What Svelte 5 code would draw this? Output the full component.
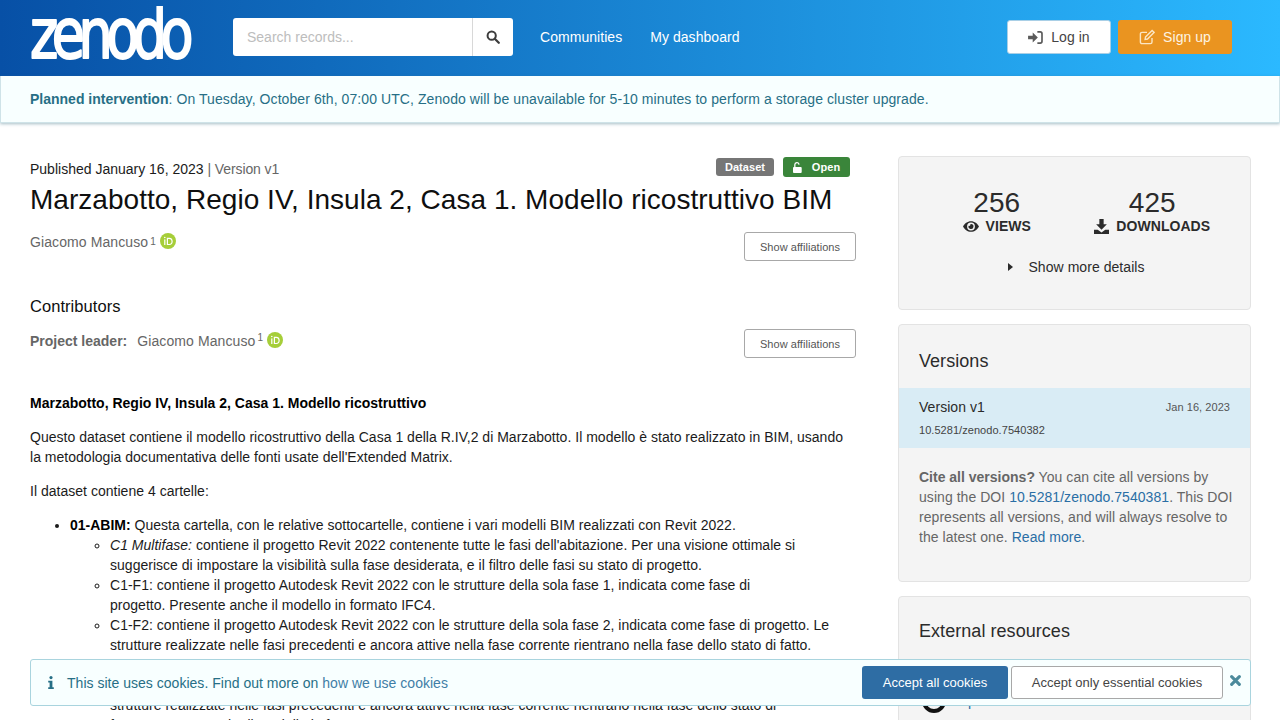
<script lang="ts">
  const subItems = [
    {
      em: 'C1 Multifase:',
      text: " contiene il progetto Revit 2022 contenente tutte le fasi dell'abitazione. Per una visione ottimale si suggerisce di impostare la visibilità sulla fase desiderata, e il filtro delle fasi su stato di progetto."
    },
    {
      text: 'C1-F1: contiene il progetto Autodesk Revit 2022 con le strutture della sola fase 1, indicata come fase di progetto.\u00a0Presente anche il modello in formato IFC4.'
    },
    {
      text: 'C1-F2: contiene il progetto Autodesk Revit 2022 con le strutture della sola fase 2, indicata come fase di progetto. Le strutture realizzate nelle fasi precedenti e ancora attive nella fase corrente rientrano nella fase dello stato di fatto. Presente anche il modello in formato IFC4.'
    },
    {
      text: 'C1-F3: contiene il progetto Autodesk Revit 2022 con le strutture della sola fase 3, indicata come fase di progetto. Le strutture realizzate nelle fasi precedenti e ancora attive nella fase corrente rientrano nella fase dello stato di fatto.\u00a0Presente anche il modello in formato IFC4.'
    }
  ];
</script>

{#snippet orcid()}
  <svg class="orcid" viewBox="0 0 16 16" width="16" height="16">
    <circle cx="8" cy="8" r="8" fill="#a6ce39" />
    <rect x="4.200" y="6.400" width="1.200" height="5.600" fill="#fff" />
    <circle cx="4.800" cy="4.500" r="0.800" fill="#fff" />
    <path fill-rule="evenodd" d="M6.800 4.800h2.600c2.200 0 3.300 1.600 3.300 3.600s-1.200 3.600-3.300 3.600H6.800zm1.200 1.100v5h1.300c1.600 0 2.200-1.200 2.200-2.500s-.7-2.500-2.200-2.500z" fill="#fff" />
  </svg>
{/snippet}

<div class="page">
  <header class="topbar">
    <svg class="logo" viewBox="0 0 164 60" width="164" height="60" role="img" aria-label="zenodo">
      <text x="0" y="41" transform="scale(1 1.280)" class="logo-text">zenodo</text>
    </svg>

    <div class="search">
      <input placeholder="Search records..." />
      <button aria-label="Search">
        <svg viewBox="0 0 16 16" width="14" height="14">
          <circle cx="6.500" cy="6.500" r="4.700" fill="none" stroke="#3d3d3d" stroke-width="2.300" />
          <path d="M10 10l4.600 4.600" stroke="#3d3d3d" stroke-width="2.600" stroke-linecap="round" />
        </svg>
      </button>
    </div>

    <nav>
      <a href="#a">Communities</a>
      <a href="#b">My dashboard</a>
    </nav>

    <div class="auth">
      <button class="login">
        <svg viewBox="0 0 16 14" width="15" height="13">
          <path d="M0 5h5V1.500L10.500 7 5 12.500V9H0z" fill="#5a5a5a" />
          <path d="M10 1h3a2 2 0 0 1 2 2v8a2 2 0 0 1-2 2h-3" fill="none" stroke="#5a5a5a" stroke-width="1.800" />
        </svg>
        Log in
      </button>
      <button class="signup">
        <svg viewBox="0 0 16 16" width="16" height="16" fill="none" stroke="#fbe6c4" stroke-width="1.400">
          <path d="M13 9v4a1.600 1.600 0 0 1-1.600 1.600H3A1.600 1.600 0 0 1 1.400 13V5A1.600 1.600 0 0 1 3 3.400h5" />
          <path d="M6.500 8l6.600-6.600 2 2L8.500 10l-2.400.4z" />
        </svg>
        Sign up
      </button>
    </div>
  </header>

  <div class="notice">
    <span><strong>Planned intervention</strong>: On Tuesday, October 6th, 07:00 UTC, Zenodo will be unavailable for 5-10 minutes to perform a storage cluster upgrade.</span>
  </div>

  <div class="layout">
    <main>
      <div class="meta">
        <p>Published January 16, 2023 <span class="dim">| Version v1</span></p>
        <div class="labels">
          <span class="label grey">Dataset</span>
          <span class="label green">
            <svg viewBox="0 0 12 12" width="11" height="11">
              <path d="M1 5.500h7.500a1 1 0 0 1 1 1V11a1 1 0 0 1-1 1H1a1 1 0 0 1-1-1V6.500a1 1 0 0 1 1-1z" fill="#fff" />
              <path d="M2 5.500V3.200a2.300 2.300 0 0 1 4.600-.3" fill="none" stroke="#fff" stroke-width="1.400" />
            </svg>
            Open
          </span>
        </div>
      </div>
      <h1>Marzabotto, Regio IV, Insula 2, Casa 1. Modello ricostruttivo BIM</h1>

      <div class="creators">
        <div class="person">Giacomo Mancuso<sup>1</sup>{@render orcid()}</div>
        <button class="ghost">Show affiliations</button>
      </div>

      <h2>Contributors</h2>
      <div class="creators second">
        <div class="person"><strong>Project leader:</strong><span class="name">Giacomo Mancuso<sup>1</sup></span>{@render orcid()}</div>
        <button class="ghost">Show affiliations</button>
      </div>

      <div class="description">
        <p><strong class="black">Marzabotto, Regio IV, Insula 2, Casa 1. Modello ricostruttivo</strong></p>
        <p>Questo dataset contiene il modello ricostruttivo della Casa 1 della R.IV,2 di Marzabotto. Il modello è stato realizzato in BIM, usando la metodologia documentativa delle fonti usate dell'Extended Matrix.</p>
        <p>Il dataset contiene 4 cartelle:</p>
        <ul>
          <li>
            <strong class="black">01-ABIM:</strong> Questa cartella, con le relative sottocartelle, contiene i vari modelli BIM realizzati con Revit 2022.
            <ul>
              {#each subItems as item}
                <li>{#if item.em}<em>{item.em}</em>{/if}{item.text}</li>
              {/each}
            </ul>
          </li>
        </ul>
      </div>
    </main>

    <aside>
      <section class="card stats">
        <div class="stat-row">
          <div class="stat">
            <div class="num">256</div>
            <div class="cap">
              <svg viewBox="0 0 18 12" width="16" height="11">
                <path fill-rule="evenodd" d="M9 0c4 0 7.300 2.700 9 6-1.700 3.300-5 6-9 6S1.700 9.300 0 6c1.700-3.300 5-6 9-6zm0 1.600a4.400 4.400 0 1 0 0 8.800 4.400 4.400 0 0 0 0-8.800zM9 3.200a2.800 2.800 0 1 1-2.700 2 1.500 1.500 0 0 0 2-2z" fill="#2b2b2b" />
              </svg>
              VIEWS
            </div>
          </div>
          <div class="stat">
            <div class="num">425</div>
            <div class="cap">
              <svg viewBox="0 0 14 14" width="15" height="15">
                <path d="M5 0h4v5h3L7 10 2 5h3z" fill="#2b2b2b" />
                <path d="M0 10h3.500L7 12.500 10.500 10H14v4H0z" fill="#2b2b2b" />
              </svg>
              DOWNLOADS
            </div>
          </div>
        </div>
        <div class="more">
          <svg viewBox="0 0 5 8" width="5" height="8"><path d="M0 0l5 4-5 4z" fill="#2b2b2b" /></svg>
          Show more details
        </div>
      </section>

      <section class="card versions">
        <h3>Versions</h3>
        <div class="version">
          <div class="v-top"><span>Version v1</span><small>Jan 16, 2023</small></div>
          <div class="doi">10.5281/zenodo.7540382</div>
        </div>
        <p class="cite">
          <strong>Cite all versions?</strong> You can cite all versions by using the DOI <a href="#c">10.5281/zenodo.7540381</a>. This DOI represents all versions, and will always resolve to the latest one. <a href="#d">Read more</a>.
        </p>
      </section>

      <section class="card external">
        <h3>External resources</h3>
        <div class="resource">
          <div class="ring"></div>
          <span>OpenAIRE</span>
        </div>
      </section>
    </aside>
  </div>

  <div class="cookies">
    <svg class="info" viewBox="0 0 6 14" width="6" height="13">
      <circle cx="3" cy="1.700" r="1.700" fill="#276f86" />
      <path d="M0 5h4.500v7H6v2H0v-2h1.500V7H0z" fill="#276f86" />
    </svg>
    <span class="c-text">This site uses cookies. Find out more on <a href="#e">how we use cookies</a></span>
    <button class="primary">Accept all cookies</button>
    <button class="outline">Accept only essential cookies</button>
    <svg class="close" viewBox="0 0 10 10" width="11" height="11">
      <path d="M1.500 1.500l7 7M8.500 1.500l-7 7" stroke="#4c8a9c" stroke-width="2.800" stroke-linecap="round" />
    </svg>
  </div>
</div>

<style>
  :global(body) {
    margin: 0;
    font-family: "Liberation Sans", Arial, sans-serif;
    font-size: 14px;
    line-height: 20px;
    letter-spacing: 0.05px;
    color: #1b1b1b;
    background: #fff;
  }

  .page {
    position: relative;
    height: 720px;
    overflow: hidden;
  }

  button {
    font-family: inherit;
    letter-spacing: inherit;
    cursor: pointer;
  }

  strong {
    letter-spacing: 0;
  }

  .topbar {
    height: 76px;
    display: flex;
    align-items: center;
    padding: 0 48px 2px 30px;
    box-sizing: border-box;
    background: linear-gradient(90deg, #0750a6 0%, #2bb9ff 100%);
  }

  .logo {
    margin-top: -2px;
    flex: none;
  }

  .logo-text {
    font-family: "DejaVu Sans", sans-serif;
    font-size: 54px;
    letter-spacing: -6.500px;
    fill: #fff;
    stroke: #fff;
    stroke-width: 1.600px;
    stroke-linejoin: round;
  }

  .search {
    display: flex;
    width: 280px;
    height: 38px;
    margin-left: 39px;
    background: #fff;
    border-radius: 3px;
    flex: none;
  }

  .search input {
    flex: 1;
    min-width: 0;
    border: 0;
    outline: 0;
    background: none;
    padding: 0 14px;
    font: 14px "Liberation Sans", Arial, sans-serif;
  }

  .search input::placeholder {
    color: #bdbdbd;
  }

  .search button {
    width: 41px;
    border: 0;
    border-left: 1px solid #d8d8d8;
    background: none;
    display: flex;
    align-items: center;
    justify-content: center;
  }

  nav {
    display: flex;
    gap: 28px;
    margin-left: 27px;
  }

  nav a {
    color: #fff;
    text-decoration: none;
  }

  .auth {
    margin-left: auto;
    display: flex;
    gap: 7px;
  }

  .auth button {
    height: 34px;
    border-radius: 3px;
    display: flex;
    align-items: center;
    justify-content: center;
    gap: 8px;
    font-size: 14px;
  }

  .login {
    width: 104px;
    background: #fff;
    color: #444;
    border: 1px solid #a9cfe6;
  }

  .signup {
    width: 114px;
    background: #ea9420;
    color: #fdf3e2;
    border: 0;
  }

  .notice {
    height: 47px;
    box-sizing: border-box;
    padding: 0 29px;
    display: flex;
    align-items: center;
    background: #f8ffff;
    color: #276f86;
    border: 1px solid #cfe3e8;
    border-top: 0;
    box-shadow: 0 1px 3px rgba(60, 110, 130, 0.45);
  }

  .notice span {
    letter-spacing: 0.08px;
  }

  .layout {
    display: grid;
    grid-template-columns: 826px 353px;
    gap: 42px;
    padding: 33px 29px 0 30px;
  }

  .meta {
    display: flex;
    justify-content: space-between;
    align-items: flex-start;
  }

  .meta p {
    margin: 3px 0 0;
    letter-spacing: 0;
  }

  .dim {
    color: #666;
    letter-spacing: -0.1px;
  }

  .labels {
    display: flex;
    align-items: center;
    gap: 9px;
    margin: 1px 6px 0 0;
  }

  .label {
    display: inline-flex;
    align-items: center;
    justify-content: center;
    height: 18px;
    border-radius: 3px;
    color: #fff;
    font-size: 11px;
    font-weight: 700;
    line-height: 1;
  }

  .grey {
    width: 58px;
    background: #767676;
  }

  .green {
    width: 67px;
    height: 20px;
    gap: 8px;
    background: #3a853a;
  }

  h1 {
    margin: 4px 0 0;
    font-size: 28px;
    line-height: 33px;
    font-weight: 400;
    letter-spacing: 0.03px;
    color: #0f0f0f;
  }

  .creators {
    display: flex;
    justify-content: space-between;
    align-items: flex-start;
    margin-top: 16px;
  }

  .person {
    display: flex;
    align-items: center;
    color: #666;
    white-space: pre;
    height: 20px;
    letter-spacing: 0.1px;
  }

  .person strong {
    color: #666;
  }

  .name {
    margin-left: 10px;
  }

  sup {
    font-size: 10px;
    line-height: 0;
    vertical-align: 5px;
    margin-left: 2px;
  }

  .orcid {
    margin: -2px 0 0 4px;
  }

  .ghost {
    width: 112px;
    height: 29px;
    background: #fff;
    border: 1px solid #a8a8a8;
    border-radius: 3px;
    color: #555;
    font-size: 11px;
    padding: 0;
  }

  h2 {
    margin: 35px 0 0;
    font-size: 16.500px;
    line-height: 20px;
    font-weight: 400;
    color: #0f0f0f;
  }

  .second {
    margin-top: 13px;
  }

  .second .person {
    margin-top: 2px;
  }

  .description {
    margin-top: 35px;
    letter-spacing: 0.02px;
  }

  .description p {
    margin: 0 0 14px;
  }

  .black {
    color: #000;
  }

  .description > ul {
    margin: 0;
    padding-left: 40px;
  }

  .description ul ul {
    padding-left: 40px;
    margin: 0;
  }

  aside {
    display: flex;
    flex-direction: column;
    gap: 14px;
  }

  .card {
    background: #f4f4f4;
    border: 1px solid #e3e3e3;
    border-radius: 4px;
    box-sizing: border-box;
  }

  .stats {
    height: 154px;
    padding-top: 31px;
    color: #2b2b2b;
  }

  .stat-row {
    display: grid;
    grid-template-columns: 1fr 1fr;
    padding: 0 20px;
  }

  .stat {
    text-align: center;
  }

  .num {
    font-size: 28px;
    line-height: 30px;
  }

  .cap {
    font-weight: 700;
    display: flex;
    justify-content: center;
    align-items: center;
    gap: 7px;
    line-height: 17px;
  }

  .more {
    display: flex;
    justify-content: center;
    gap: 15px;
    align-items: center;
    margin: 22px 0 0 4px;
  }

  .versions {
    height: 258px;
    color: #2b2b2b;
  }

  h3 {
    margin: 0;
    font-size: 18px;
    line-height: 22px;
    font-weight: 400;
    color: #2b2b2b;
  }

  .versions h3 {
    padding: 25px 20px 16px;
  }

  .version {
    background: #d9ecf5;
    padding: 9px 20px 0;
    height: 60px;
    box-sizing: border-box;
  }

  .v-top {
    display: flex;
    justify-content: space-between;
    align-items: center;
  }

  .v-top small {
    font-size: 11px;
    color: #555;
  }

  .doi {
    font-size: 11px;
    color: #444;
    margin-top: 3px;
  }

  .cite {
    margin: 19px 0 0;
    padding: 0 16px 0 20px;
    color: #666;
  }

  .cite a {
    color: #2a6ea5;
    text-decoration: none;
  }

  .external {
    flex: 1;
    height: 200px;
  }

  .external h3 {
    padding: 23px 20px 0;
  }

  .resource {
    display: flex;
    align-items: center;
    gap: 11px;
    margin: 47px 0 0 23px;
    color: #2a6ea5;
  }

  .ring {
    width: 24px;
    height: 24px;
    border: 4px solid #111;
    border-radius: 50%;
    box-sizing: border-box;
  }

  .cookies {
    position: absolute;
    left: 30px;
    top: 659px;
    width: 1221px;
    height: 47px;
    box-sizing: border-box;
    display: flex;
    align-items: center;
    padding: 0 9px 0 17px;
    background: #f8ffff;
    border: 1px solid #a9d4de;
    border-radius: 3px;
    color: #276f86;
    letter-spacing: 0.02px;
  }

  .c-text {
    margin-left: 13px;
  }

  .c-text a {
    color: #3f7ea6;
    text-decoration: none;
  }

  .cookies button {
    height: 33px;
    border-radius: 3px;
    font-size: 13px;
  }

  .primary {
    margin-left: auto;
    width: 146px;
    background: #2e6da4;
    color: #fff;
    border: 0;
  }

  .outline {
    margin-left: 3px;
    width: 212px;
    background: #fff;
    color: #444;
    border: 1px solid #a8a8a8;
  }

  .close {
    margin-left: 7px;
    margin-top: -4px;
  }
</style>
